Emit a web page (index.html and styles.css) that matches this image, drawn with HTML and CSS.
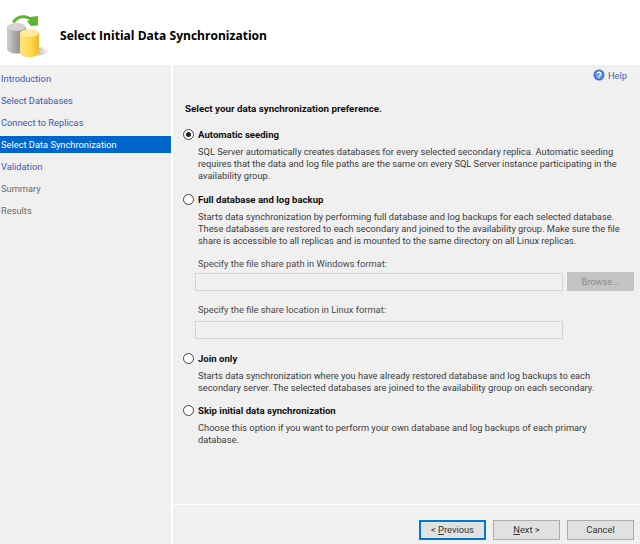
FILE: index.html
```html
<!DOCTYPE html>
<html lang="en">
<head>
<meta charset="utf-8">
<title>Select Initial Data Synchronization</title>
<link rel="stylesheet" href="styles.css">
</head>
<body>
<header class="header">
  <svg class="logo" width="46" height="46" viewBox="0 0 46 46" aria-hidden="true">
    <defs>
      <linearGradient id="gray" x1="0" x2="1" y1="0" y2="0">
        <stop offset="0" stop-color="#d0d0d0"/><stop offset=".5" stop-color="#a0a0a0"/><stop offset="1" stop-color="#7c7c7c"/>
      </linearGradient>
      <linearGradient id="gold" x1="0" x2="1" y1="0" y2="0">
        <stop offset="0" stop-color="#ffe47a"/><stop offset=".55" stop-color="#ffd84d"/><stop offset="1" stop-color="#f0b82c"/>
      </linearGradient>
      <linearGradient id="shade" x1="0" x2="1" y1="0" y2="0">
        <stop offset="0" stop-color="#aaa" stop-opacity=".7"/><stop offset="1" stop-color="#bbb" stop-opacity="0"/>
      </linearGradient>
    </defs>
    <path d="M32 42l12-3-8-6-3 1z" fill="url(#shade)"/>
    <path d="M1 13v22c0 2.500 4 4.500 9.500 4.500S20 37.500 20 35V13z" fill="url(#gray)"/>
    <ellipse cx="10.500" cy="13" rx="9.500" ry="4" fill="#d4d4d4"/>
    <path d="M14 19v19c0 3 4 5 9.500 5S33 41 33 38V19z" fill="url(#gold)"/>
    <ellipse cx="23.500" cy="19" rx="9.500" ry="4" fill="#ffeb99"/>
    <path d="M6 8C9 2 17-1 24 3l8-1v9.500l-7 .5-4-5 3-1C18 3 11 4 9 9z" fill="#5fb52b"/>
  </svg>
  <h1 class="title">Select Initial Data Synchronization</h1>
</header>
<div class="main">
  <nav class="nav">
    <a class="step link">Introduction</a>
    <a class="step link">Select Databases</a>
    <a class="step link">Connect to Replicas</a>
    <a class="step active">Select Data Synchronization</a>
    <a class="step link">Validation</a>
    <a class="step muted">Summary</a>
    <a class="step muted">Results</a>
  </nav>
  <div class="panel">
    <div class="body">
      <div class="help">
        <svg class="help-icon" width="12" height="12" viewBox="0 0 12 12" aria-hidden="true">
          <circle cx="6" cy="6" r="5.500" fill="#3f6fc4"/>
          <circle cx="6" cy="6" r="3.800" fill="#6f9be0"/>
          <path d="M4.300 4.800c0-2.200 3.600-2.200 3.600 0 0 1.400-1.900 1.300-1.900 2.600" fill="none" stroke="#fff" stroke-width="1.200"/>
          <rect x="5.400" y="8" width="1.200" height="1.200" fill="#fff"/>
        </svg>
        <span>Help</span>
      </div>
      <p class="heading">Select your data synchronization preference.</p>

      <div class="option first">
        <span class="radio checked"></span>
        <span class="option-label">Automatic seeding</span>
      </div>
      <p class="desc">SQL Server automatically creates databases for every selected secondary replica. Automatic seeding<br>requires that the data and log file paths are the same on every SQL Server instance participating in the<br>availability group.</p>

      <div class="option gap-full">
        <span class="radio"></span>
        <span class="option-label">Full database and log backup</span>
      </div>
      <p class="desc">Starts data synchronization by performing full database and log backups for each selected database.<br>These databases are restored to each secondary and joined to the availability group. Make sure the file<br>share is accessible to all replicas and is mounted to the same directory on all Linux replicas.</p>
      <p class="field-label win">Specify the file share path in Windows format:</p>
      <div class="field-row">
        <div class="input"></div>
        <div class="browse">Browse...</div>
      </div>
      <p class="field-label linux">Specify the file share location in Linux format:</p>
      <div class="input solo"></div>

      <div class="option gap-join">
        <span class="radio"></span>
        <span class="option-label">Join only</span>
      </div>
      <p class="desc">Starts data synchronization where you have already restored database and log backups to each<br>secondary server. The selected databases are joined to the availability group on each secondary.</p>

      <div class="option gap-skip">
        <span class="radio"></span>
        <span class="option-label">Skip initial data synchronization</span>
      </div>
      <p class="desc">Choose this option if you want to perform your own database and log backups of each primary<br>database.</p>
    </div>
    <footer class="footer">
      <button class="btn default">&lt; <u>P</u>revious</button>
      <button class="btn"><u>N</u>ext &gt;</button>
      <button class="btn">Cancel</button>
    </footer>
  </div>
</div>
</body>
</html>
```

FILE: styles.css
```css
* { box-sizing: border-box; }
html, body { margin: 0; padding: 0; }
body {
  width: 640px;
  height: 544px;
  overflow: hidden;
  background: #fff;
  font-family: "Roboto", "Liberation Sans", sans-serif;
  font-size: 9.3px;
  color: #333;
  display: flex;
  flex-direction: column;
}
p { margin: 0; }
.header {
  height: 65px;
  flex: none;
  display: flex;
  align-items: center;
  background: #fff;
  padding: 12px 0 0 6px;
}
.logo { flex: none; margin-top: -3px; }
.title {
  margin: -6px 0 0 8px;
  font-family: "Open Sans", sans-serif;
  font-size: 12.05px;
  font-weight: 700;
  color: #000;
}
.main { flex: 1; display: flex; min-height: 0; }
.nav {
  width: 171px;
  flex: none;
  background: #f0f0f0;
  padding-top: 5px;
  display: flex;
  flex-direction: column;
  gap: 5px;
}
.step { height: 17px; line-height: 17px; padding-left: 1px; white-space: nowrap; }
.link { color: #3c5ab4; }
.muted { color: #6d6d6d; }
.active { background: #0066cc; color: #fff; }
.panel {
  flex: 1;
  margin-left: 2px;
  background: #f0f0f0;
  display: flex;
  flex-direction: column;
  min-width: 0;
}
.body { flex: 1; padding: 0 6px 0 12px; }
.help {
  display: flex;
  justify-content: flex-end;
  align-items: center;
  gap: 3px;
  height: 14px;
  margin-top: 3px;
  padding-right: 7px;
  color: #3c6cb4;
}
.help-icon { flex: none; }
.heading { margin-top: 20px; line-height: 14px; font-size: 9.8px; font-weight: 700; color: #111; }
.option { display: flex; align-items: center; height: 14px; }
.first { margin-top: 11px; }
.gap-full { margin-top: 10px; }
.gap-join { margin-top: 12px; }
.gap-skip { margin-top: 9px; }
.radio {
  width: 11px;
  height: 11px;
  border: 1px solid #444;
  border-radius: 50%;
  background: #fff;
  flex: none;
  margin: 0 4px 0 -2px;
  display: flex;
  align-items: center;
  justify-content: center;
}
.radio.checked::after {
  content: "";
  width: 5px;
  height: 5px;
  border-radius: 50%;
  background: #222;
}
.option-label { font-size: 9.6px; font-weight: 700; color: #111; }
.desc { margin: 5px 0 0 13px; line-height: 12px; white-space: nowrap; color: #3c3c3c; }
.field-label { margin-left: 13px; line-height: 12px; color: #4a4a4a; }
.win { margin-top: 11px; }
.linux { margin-top: 13px; }
.field-row { display: flex; align-items: flex-end; margin-top: 2px; margin-left: 10px; gap: 4px; }
.input {
  width: 368px;
  height: 18px;
  border: 1px solid #d4d4d4;
  background: #f0f0f0;
}
.solo { margin: 5px 0 0 10px; }
.browse {
  width: 67px;
  height: 19px;
  background: #c4c4c4;
  color: #8a8a8a;
  line-height: 19px;
  text-align: center;
}
.footer {
  flex: none;
  height: 40px;
  border-top: 1px solid #fff;
  padding: 15px 6px 0 0;
  display: flex;
  justify-content: flex-end;
  gap: 7px;
}
.btn {
  width: 67px;
  height: 20px;
  padding: 0;
  border: 1px solid #adadad;
  background: #e1e1e1;
  color: #333;
  font: inherit;
  line-height: 16px;
}
.btn.default { border: 1px solid #0078d7; box-shadow: inset 0 0 0 1px #0078d7; }
```
